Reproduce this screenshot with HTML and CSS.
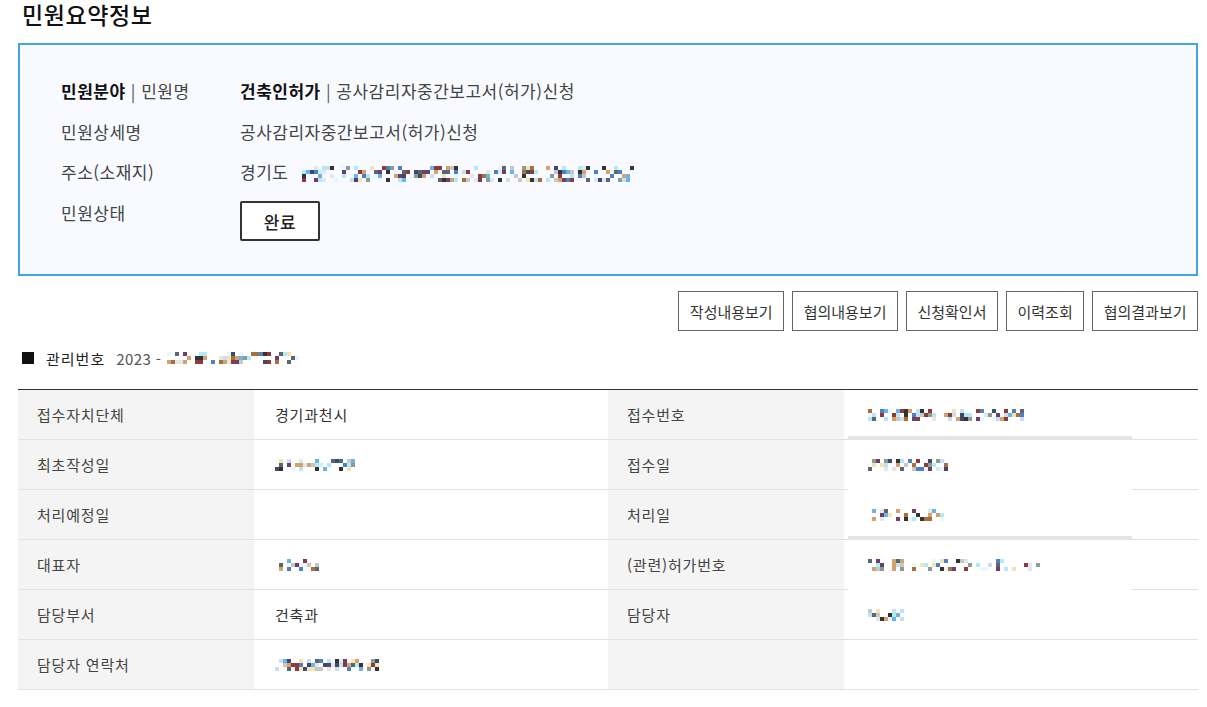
FILE: index.html
```html
<!DOCTYPE html>
<html lang="ko">
<head>
<meta charset="utf-8">
<title>민원요약정보</title>
<link rel="stylesheet" href="styles.css">
</head>
<body>
<div class="page">
  <h1 class="title">민원요약정보</h1>

  <section class="summary">
    <div class="srow">
      <div class="sl"><b>민원분야</b> <span class="bar">|</span> 민원명</div>
      <div class="sv"><b>건축인허가</b> <span class="bar">|</span> 공사감리자중간보고서(허가)신청</div>
    </div>
    <div class="srow">
      <div class="sl">민원상세명</div>
      <div class="sv">공사감리자중간보고서(허가)신청</div>
    </div>
    <div class="srow">
      <div class="sl">주소(소재지)</div>
      <div class="sv">경기도 <span class="mz mz-addr" data-c="83" data-r="4" data-s="11" data-d="0.5"></span></div>
    </div>
    <div class="srow">
      <div class="sl">민원상태</div>
      <div class="sv"><span class="status">완료</span></div>
    </div>
  </section>

  <div class="actions">
    <button class="btn">작성내용보기</button>
    <button class="btn">협의내용보기</button>
    <button class="btn">신청확인서</button>
    <button class="btn">이력조회</button>
    <button class="btn">협의결과보기</button>
  </div>

  <div class="mgmt">
    <span class="sq"></span><span class="mk">관리번호</span><span class="yr">2023 -</span><span class="mz" data-c="33" data-r="3" data-s="5" data-d="0.5"></span>
  </div>

  <div class="grid">
    <div class="th">접수자치단체</div><div class="td">경기과천시</div>
    <div class="th">접수번호</div><div class="td tdr"><span class="mz" data-c="39" data-r="3" data-s="21" data-d="0.6"></span></div>

    <div class="th">최초작성일</div><div class="td"><span class="mz" data-c="21" data-r="3" data-s="33" data-d="0.6"></span></div>
    <div class="th">접수일</div><div class="td tdr"><span class="mz" data-c="20" data-r="3" data-s="41" data-d="0.6"></span></div>

    <div class="th">처리예정일</div><div class="td"></div>
    <div class="th">처리일</div><div class="td tdr"><span class="mz" data-c="20" data-r="3" data-s="57" data-d="0.4"></span></div>

    <div class="th">대표자</div><div class="td"><span class="mz" data-c="11" data-r="3" data-s="63" data-d="0.5"></span></div>
    <div class="th">(관련)허가번호</div><div class="td tdr"><span class="mz" data-c="43" data-r="3" data-s="71" data-d="0.45"></span></div>

    <div class="th">담당부서</div><div class="td">건축과</div>
    <div class="th">담당자</div><div class="td tdr"><span class="mz" data-c="9" data-r="3" data-s="83" data-d="0.65"></span></div>

    <div class="th">담당자 연락처</div><div class="td"><span class="mz" data-c="26" data-r="3" data-s="97" data-d="0.6"></span></div>
    <div class="th"></div><div class="td tdr"></div>

    <div class="cover"><div class="cover-bar"></div></div>
  </div>
</div>
<script src="mosaic.js"></script>
</body>
</html>
```

FILE: styles.css
```css
* { box-sizing: border-box; }
html, body { margin: 0; padding: 0; background: #fff; }
body {
  font-family: "Noto Sans CJK KR", "Noto Sans", sans-serif;
  color: #333;
}
.page {
  width: 1180px;
  margin-left: 18px;
}
.title {
  margin: 0;
  padding: 0 0 0 4px;
  font-size: 23px;
  line-height: 28px;
  letter-spacing: 0.6px;
  font-weight: 500;
  color: #111;
}
.summary {
  margin-top: 15px;
  border: 2px solid #43a5df;
  background: #f8faff;
  padding: 26px 0 32px 41px;
}
.srow {
  display: flex;
  font-size: 17px;
  letter-spacing: 0.5px;
  line-height: 40.5px;
  color: #444;
}
.sl { width: 179px; flex: none; }
.sv { flex: 1; }
.summary b { font-weight: 700; color: #111; }
.bar { color: #555; }
.status {
  display: inline-flex;
  align-items: center;
  justify-content: center;
  width: 80px;
  height: 40px;
  margin-top: 8.5px;
  border: 2px solid #333;
  border-radius: 2px;
  background: #fff;
  color: #222;
  font-weight: 500;
  line-height: 1;
}
.actions {
  display: flex;
  justify-content: flex-end;
  gap: 8px;
  margin-top: 15px;
}
.btn {
  height: 40px;
  padding: 0 10.5px;
  border: 1px solid #666;
  background: #fff;
  font-family: inherit;
  font-size: 15px;
  color: #333;
  cursor: pointer;
}
.mgmt {
  display: flex;
  align-items: center;
  margin-top: 17px;
  padding-left: 4px;
  height: 20px;
  font-size: 15px;
  color: #222;
}
.sq {
  width: 12px;
  height: 12px;
  background: #111;
  margin-right: 12px;
}
.mk { color: #222; letter-spacing: 1px; }
.yr { color: #555; margin-left: 11px; margin-right: 6px; letter-spacing: 0.4px; }
.grid {
  position: relative;
  margin-top: 21px;
  display: grid;
  grid-template-columns: 236px 354px 236px 354px;
  border-top: 1px solid #333;
}
.th, .td {
  height: 50px;
  border-bottom: 1px solid #e2e2e2;
  display: flex;
  align-items: center;
  font-size: 15px;
  letter-spacing: 0.8px;
}
.th {
  background: #f4f4f4;
  padding-left: 19px;
  color: #444;
}
.td {
  padding-left: 21px;
  color: #333;
}
.tdr { padding-left: 24px; }
.td .mz { position: relative; z-index: 2; }
.cover {
  position: absolute;
  left: 830px;
  top: 46px;
  width: 284px;
  height: 155px;
  background: #fff;
  border-top: 4px solid #e4e4e4;
  z-index: 1;
}
.cover-bar {
  margin-top: 96px;
  height: 4px;
  background: #e4e4e4;
}
.mz {
  display: inline-grid;
  vertical-align: middle;
}
.mz-addr { margin-left: 8px; }
.mz i { display: block; width: 4px; height: 4px; }
```

FILE: mosaic.js
```js
(function () {
  var pal = ['#3d4a6b', '#4f7fc4', '#6cb3e6', '#b0eaf7', '#d5a26c', '#8d3a3a',
             '#333333', '#8f9a93', '#c6c8c8', '#f6e3b4', '#a8703c', '#dfe8ec',
             '#5a6670', '#6b3f6a', '#c8dff0', '#e7f7fb'];
  function rng(seed) {
    var s = seed * 9301 + 49297;
    return function () {
      s = (s * 1103515245 + 12345) % 2147483648;
      return s / 2147483648;
    };
  }
  var els = document.querySelectorAll('.mz');
  for (var k = 0; k < els.length; k++) {
    var el = els[k];
    var c = +el.dataset.c, r = +el.dataset.r || 3, d = +el.dataset.d || 0.6;
    var R = rng(+el.dataset.s || 1);
    el.style.gridTemplateColumns = 'repeat(' + c + ', 4px)';
    for (var y = 0; y < r; y++) {
      for (var x = 0; x < c; x++) {
        var cell = document.createElement('i');
        var dens = d * (y === 0 ? 0.8 : 1);
        if (R() < dens) {
          cell.style.background = pal[Math.floor(R() * pal.length)];
        }
        el.appendChild(cell);
      }
    }
  }
})();
```
